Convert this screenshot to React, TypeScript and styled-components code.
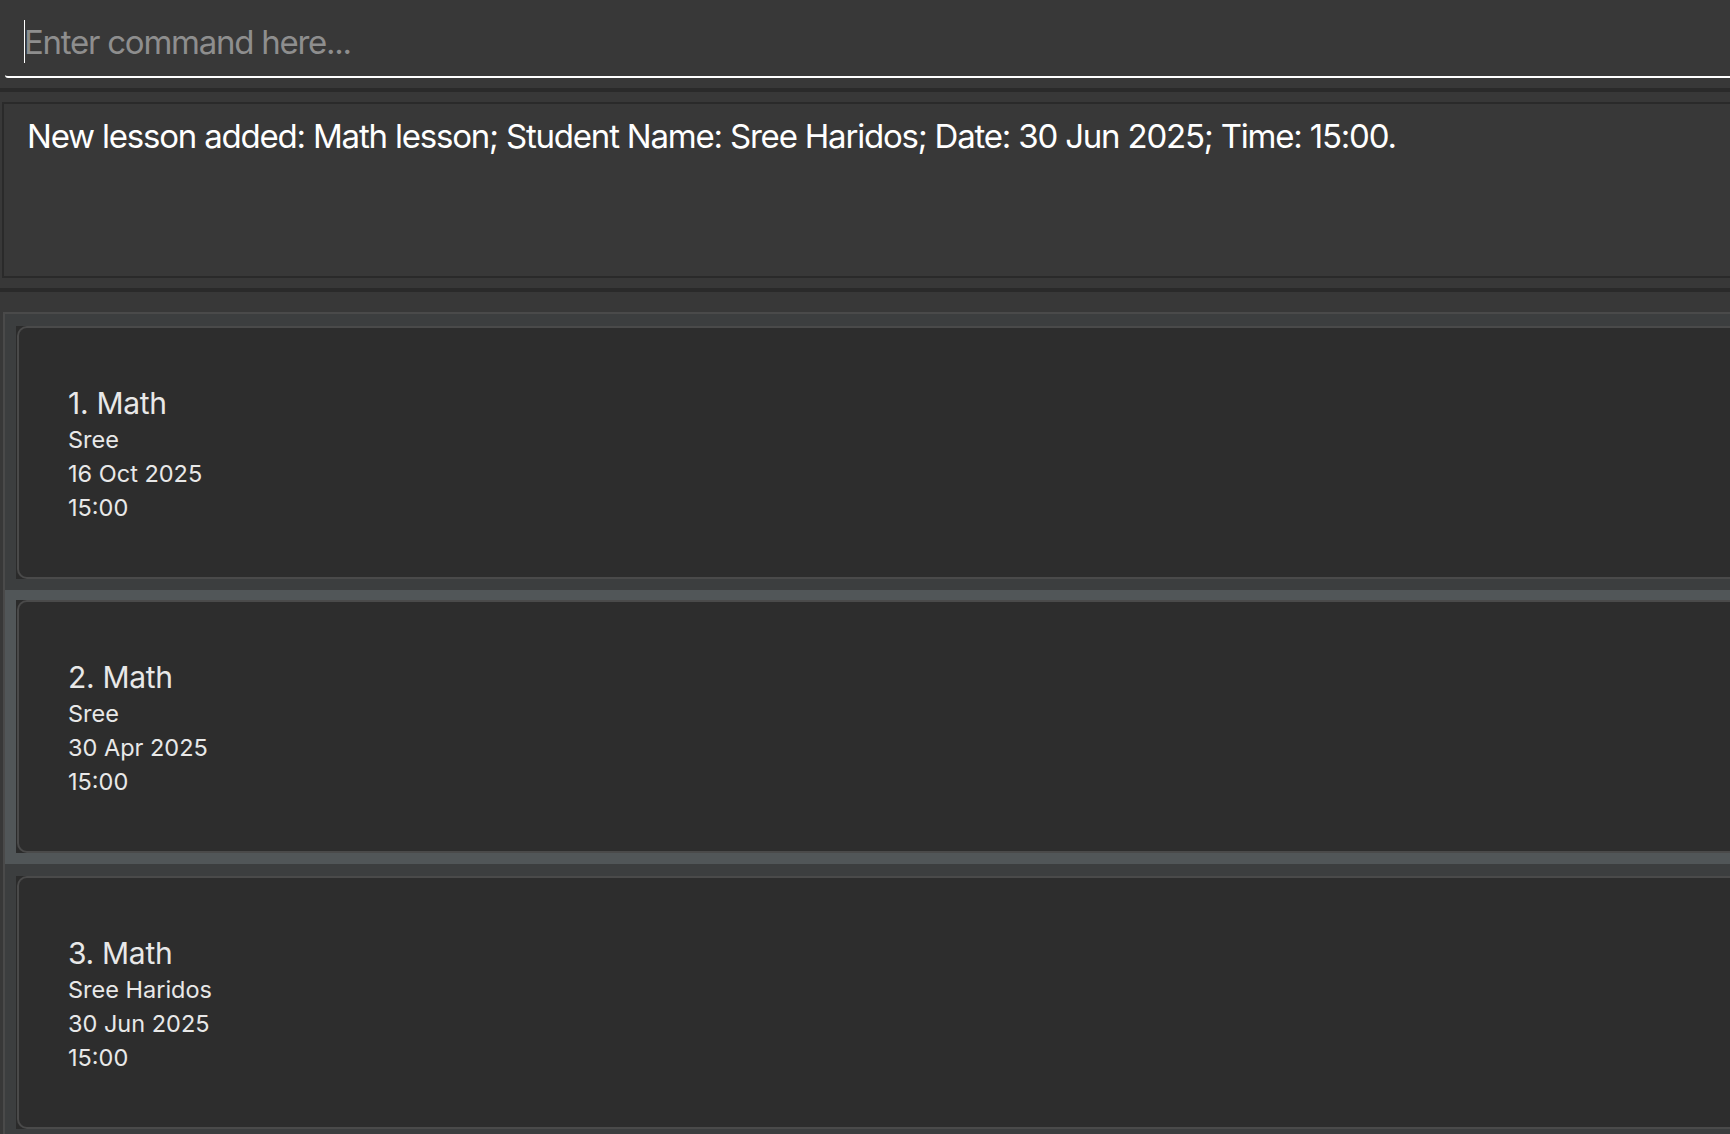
import React from "react";
import styled, { createGlobalStyle } from "styled-components";

const GlobalStyle = createGlobalStyle`
  html, body {
    margin: 0;
    padding: 0;
    background: #383838;
    overflow: hidden;
    font-family: Inter, "Noto Sans", "Liberation Sans", sans-serif;
  }
  * { box-sizing: border-box; }
`;

const Window = styled.div`
  width: calc(100% + 40px);
  height: 100vh;
  display: flex;
  flex-direction: column;
  background: #383838;
`;

const CommandPane = styled.div`
  height: 88px;
  padding: 8px 0 10px 5px;
  background: #383838;
`;

const CommandField = styled.div`
  position: relative;
  height: 70px;
  border-bottom: 2px solid #ffffff;
  border-bottom-left-radius: 3px;
  display: flex;
  align-items: center;
`;

const Caret = styled.span`
  position: absolute;
  left: 19px;
  top: 12px;
  width: 1px;
  height: 43px;
  background: #ffffff;
`;

const CommandInput = styled.input`
  width: 100%;
  height: 100%;
  border: none;
  outline: none;
  background: transparent;
  caret-color: transparent;
  color: #ffffff;
  padding: 0 0 0 19px;
  font-family: Inter, "Noto Sans", sans-serif;
  font-size: 33px;
  font-weight: 400;
  letter-spacing: -1.25px;
  &::placeholder {
    color: #8e8e8e;
    opacity: 1;
  }
`;

const ResultPane = styled.div`
  height: 200px;
  border-top: 4px solid #2a2a2a;
  padding: 10px 0 10px 2px;
  background: #383838;
`;

const ResultBox = styled.div`
  height: 176px;
  border: 2px solid #2a2a2a;
  border-right: none;
  padding: 13px 0 0 23px;
  color: #ffffff;
  font-size: 33px;
  line-height: 1.2;
  letter-spacing: -1.2px;
  white-space: nowrap;
`;

const ListPane = styled.div`
  flex: 1;
  min-height: 0;
  border-top: 4px solid #2a2a2a;
  padding: 20px 0 0 3px;
  background: #383838;
`;

const ListView = styled.div`
  display: flex;
  flex-direction: column;
  border-top: 2px solid #4a4a4a;
  border-left: 2px solid #4a4a4a;
`;

const Cell = styled.div<{ $odd: boolean }>`
  padding: ${(p) => (p.$odd ? "10px" : "12px")} 0 11px 11px;
  background: ${(p) => (p.$odd ? "#515658" : "#3c3e3f")};
`;

const CardFrame = styled.div`
  height: 253px;
  background: #2b2b2b;
  padding-left: 1px;
`;

const Card = styled.div`
  height: 100%;
  background: #2d2d2d;
  border: 2px solid #4a4a4a;
  border-right: none;
  border-radius: 10px 0 0 10px;
  display: flex;
  flex-direction: column;
  justify-content: center;
  padding: 3px 0 0 49px;
  color: #e8e8e8;
`;

const Title = styled.div`
  font-size: 30px;
  line-height: 40px;
  letter-spacing: -0.3px;
`;

const Detail = styled.div`
  font-size: 23.5px;
  line-height: 34px;
  letter-spacing: 0;
`;

type Lesson = { title: string; student: string; date: string; time: string };

const lessons: Lesson[] = [
  { title: "Math", student: "Sree", date: "16 Oct 2025", time: "15:00" },
  { title: "Math", student: "Sree", date: "30 Apr 2025", time: "15:00" },
  { title: "Math", student: "Sree Haridos", date: "30 Jun 2025", time: "15:00" },
];

export default function App() {
  return (
    <>
      <GlobalStyle />
      <Window>
        <CommandPane>
          <CommandField>
            <Caret />
            <CommandInput placeholder="Enter command here..." />
          </CommandField>
        </CommandPane>
        <ResultPane>
          <ResultBox>
            New lesson added: Math lesson; Student Name: Sree Haridos; Date: 30 Jun 2025; Time: 15:00.
          </ResultBox>
        </ResultPane>
        <ListPane>
          <ListView>
            {lessons.map((l, i) => (
              <Cell key={i} $odd={i % 2 === 1}>
                <CardFrame>
                  <Card>
                    <Title>
                      {i + 1}. {l.title}
                    </Title>
                    <Detail>{l.student}</Detail>
                    <Detail>{l.date}</Detail>
                    <Detail>{l.time}</Detail>
                  </Card>
                </CardFrame>
              </Cell>
            ))}
          </ListView>
        </ListPane>
      </Window>
    </>
  );
}
